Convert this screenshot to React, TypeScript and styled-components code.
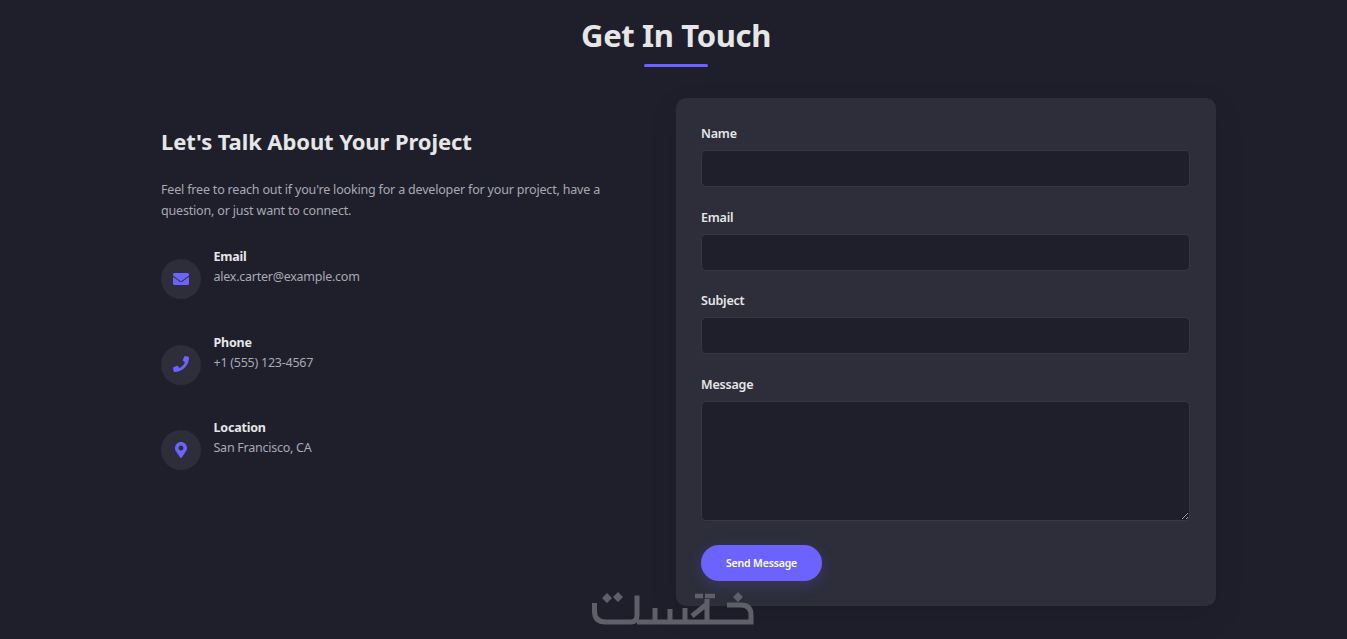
import styled, { createGlobalStyle } from "styled-components";
import { FaEnvelope, FaMapMarkerAlt, FaPhone } from "react-icons/fa";

const Global = createGlobalStyle`
  html, body {
    margin: 0;
    padding: 0;
    height: 100%;
    overflow: hidden;
    background: #1e1f2b;
  }
  * { box-sizing: border-box; }
`;

const Page = styled.section`
  position: relative;
  width: 1352px;
  height: 639px;
  overflow: hidden;
  background: #1e1f2b;
  color: #e6e6e6;
  font-family: "Noto Sans", "Open Sans", sans-serif;
`;

const Heading = styled.h2`
  margin: 0;
  padding-top: 13px;
  height: 64px;
  text-align: center;
  font-size: 31px;
  line-height: 44px;
  font-weight: 700;
  letter-spacing: -0.35px;
  color: #e6e6e6;
`;

const Rule = styled.div`
  width: 64px;
  height: 3px;
  margin: 0 auto;
  border-radius: 2px;
  background: #6c63ff;
`;

const Columns = styled.div`
  display: grid;
  grid-template-columns: 540px 540px;
  width: 1080px;
  margin: 31px 0 0 136px;
`;

const Info = styled.div`
  padding: 25px;
`;

const InfoTitle = styled.h3`
  margin: 0 0 20px;
  font-size: 22px;
  line-height: 36px;
  font-weight: 700;
  letter-spacing: -0.1px;
  color: #e6e6e6;
`;

const InfoText = styled.p`
  margin: 0 0 25px;
  font-size: 12.5px;
  line-height: 21px;
  letter-spacing: -0.18px;
  color: #a9a9b3;
`;

const ContactRow = styled.div`
  display: flex;
  gap: 12.5px;
  height: 85.5px;
`;

const IconCircle = styled.div`
  flex: none;
  display: flex;
  align-items: center;
  justify-content: center;
  width: 40px;
  height: 40px;
  margin-top: 13px;
  padding-bottom: 1px;
  border-radius: 50%;
  background: #2d2e3a;
  color: #6c63ff;
  font-size: 16px;
`;

const ContactLabel = styled.div`
  height: 20px;
  font-size: 12.5px;
  line-height: 22px;
  font-weight: 700;
  letter-spacing: -0.2px;
  color: #e6e6e6;
`;

const ContactValue = styled.div`
  font-size: 12.5px;
  line-height: 21px;
  letter-spacing: -0.25px;
  color: #a9a9b3;
`;

const Card = styled.form`
  height: 508px;
  padding: 25px 26px 25px 25px;
  border-radius: 10px;
  background: #2d2e3a;
  box-shadow: 0 10px 30px rgba(0, 0, 0, 0.1);
`;

const Field = styled.div`
  margin-bottom: 19.67px;
`;

const Label = styled.label`
  display: block;
  height: 18px;
  margin-bottom: 9px;
  font-size: 12.5px;
  line-height: 22px;
  font-weight: 600;
  letter-spacing: -0.2px;
  color: #e6e6e6;
`;

const Input = styled.input`
  display: block;
  width: 100%;
  height: 37px;
  border: 1px solid #363743;
  border-radius: 5px;
  background: #1e1f2b;
  outline: none;
`;

const TextArea = styled.textarea`
  display: block;
  width: 100%;
  height: 120px;
  border: 1px solid #363743;
  border-radius: 5px;
  background: #1e1f2b;
  outline: none;
`;

const SendButton = styled.button`
  display: block;
  width: 121px;
  height: 36px;
  margin-top: 24px;
  border: none;
  border-radius: 18px;
  background: #6c63ff;
  color: #fff;
  font-family: inherit;
  font-size: 10.5px;
  font-weight: 600;
  letter-spacing: -0.15px;
  box-shadow: 0 4px 15px rgba(108, 99, 255, 0.2);
`;

const Watermark = styled.svg`
  position: absolute;
  left: 591px;
  top: 591px;
`;

const contacts = [
  { label: "Email", value: "alex.carter@example.com", icon: <FaEnvelope /> },
  { label: "Phone", value: "+1 (555) 123-4567", icon: <FaPhone /> },
  { label: "Location", value: "San Francisco, CA", icon: <FaMapMarkerAlt /> },
];

export default function App() {
  return (
    <Page>
      <Global />
      <Heading>Get In Touch</Heading>
      <Rule />
      <Columns>
        <Info>
          <InfoTitle>Let's Talk About Your Project</InfoTitle>
          <InfoText>
            Feel free to reach out if you're looking for a developer for your project, have a
            question, or just want to connect.
          </InfoText>
          {contacts.map((c) => (
            <ContactRow key={c.label}>
              <IconCircle>{c.icon}</IconCircle>
              <div>
                <ContactLabel>{c.label}</ContactLabel>
                <ContactValue>{c.value}</ContactValue>
              </div>
            </ContactRow>
          ))}
        </Info>
        <Card onSubmit={(e) => e.preventDefault()}>
          <Field>
            <Label>Name</Label>
            <Input />
          </Field>
          <Field>
            <Label>Email</Label>
            <Input />
          </Field>
          <Field>
            <Label>Subject</Label>
            <Input />
          </Field>
          <Field>
            <Label>Message</Label>
            <TextArea />
          </Field>
          <SendButton>Send Message</SendButton>
        </Card>
      </Columns>
      <Watermark width="164" height="36" viewBox="0 0 164 36" fill="none" stroke="#5f5f69" strokeWidth="5">
        <path d="M3.500 12v8q0 11 11 11h25q6.500 0 6.500 -6.500v-20" />
        <path d="M46 31h114v-7q0 -10 -10 -10h-14" />
        <path d="M64 17v14M79 18v13M94 17v14M116 8v23M101 25l15 -12" />
        <path d="M104 5h8M114 5h10" strokeWidth="4.500" />
        <path d="M16 2l5 5l-5 5l-5 -5zM27 1l5 5l-5 5l-5 -5zM147 1l5 5l-5 5l-5 -5z" fill="#5f5f69" stroke="none" />
      </Watermark>
    </Page>
  );
}
